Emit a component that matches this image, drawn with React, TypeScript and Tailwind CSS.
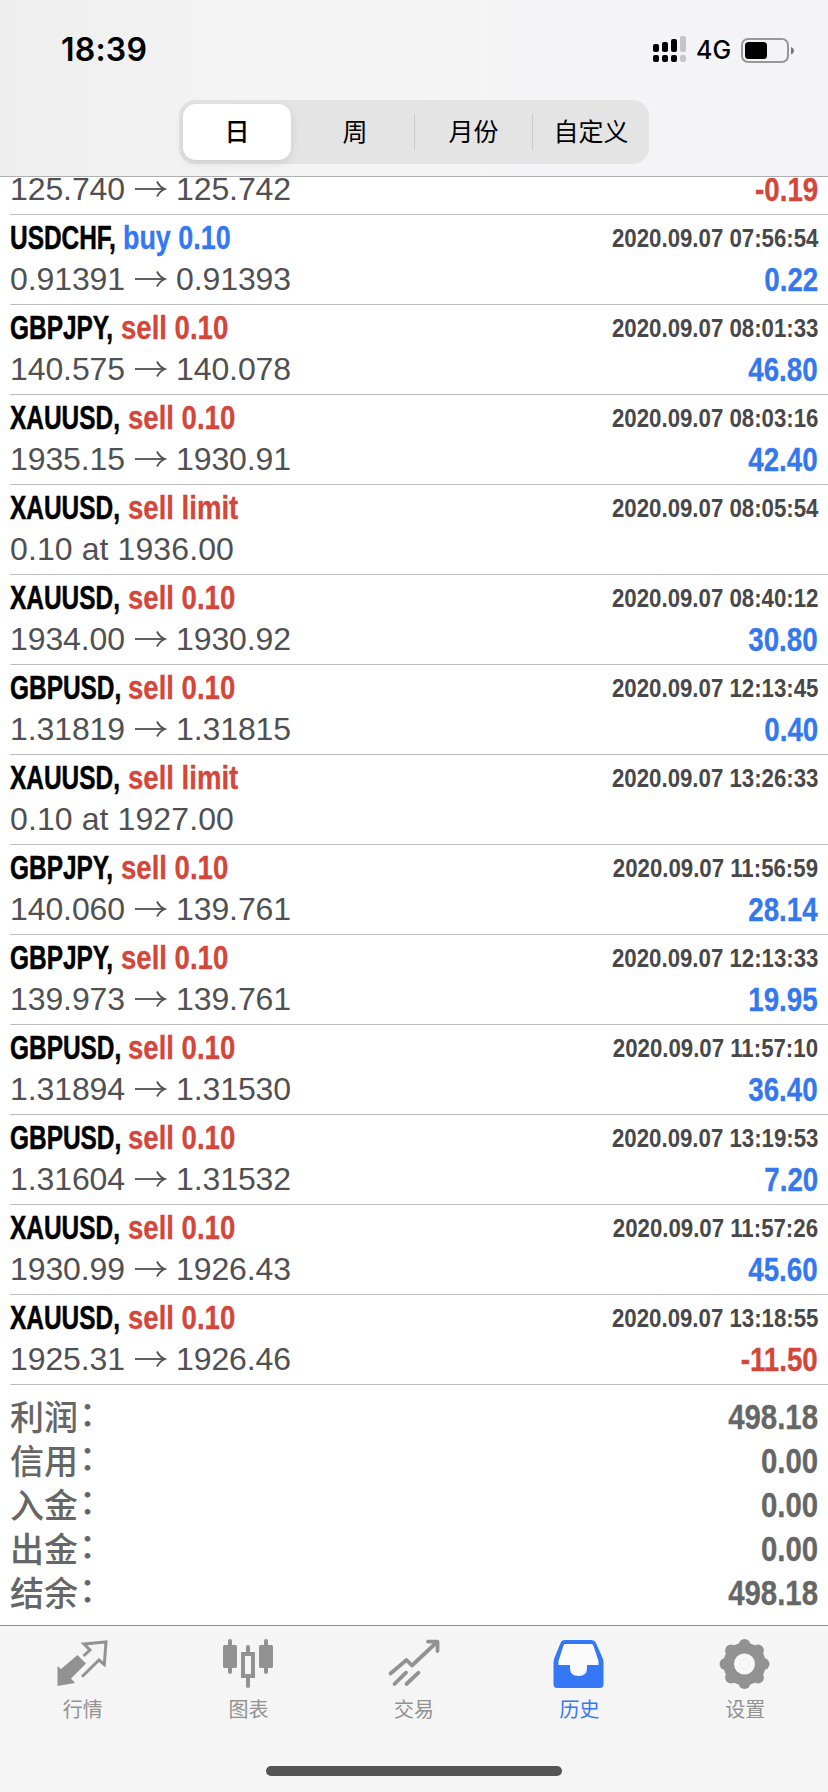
import type { ReactNode } from "react";

type Deal = {
  symbol: "USDCHF" | "GBPJPY" | "XAUUSD" | "GBPUSD";
  action: string;
  time: string;
  open?: string;
  close?: string;
  note?: string;
  profit?: string;
};

const deals: Deal[] = [
  { symbol: "USDCHF", action: "buy 0.10", time: "2020.09.07 07:56:54", open: "0.91391", close: "0.91393", profit: "0.22" },
  { symbol: "GBPJPY", action: "sell 0.10", time: "2020.09.07 08:01:33", open: "140.575", close: "140.078", profit: "46.80" },
  { symbol: "XAUUSD", action: "sell 0.10", time: "2020.09.07 08:03:16", open: "1935.15", close: "1930.91", profit: "42.40" },
  { symbol: "XAUUSD", action: "sell limit", time: "2020.09.07 08:05:54", note: "0.10 at 1936.00" },
  { symbol: "XAUUSD", action: "sell 0.10", time: "2020.09.07 08:40:12", open: "1934.00", close: "1930.92", profit: "30.80" },
  { symbol: "GBPUSD", action: "sell 0.10", time: "2020.09.07 12:13:45", open: "1.31819", close: "1.31815", profit: "0.40" },
  { symbol: "XAUUSD", action: "sell limit", time: "2020.09.07 13:26:33", note: "0.10 at 1927.00" },
  { symbol: "GBPJPY", action: "sell 0.10", time: "2020.09.07 11:56:59", open: "140.060", close: "139.761", profit: "28.14" },
  { symbol: "GBPJPY", action: "sell 0.10", time: "2020.09.07 12:13:33", open: "139.973", close: "139.761", profit: "19.95" },
  { symbol: "GBPUSD", action: "sell 0.10", time: "2020.09.07 11:57:10", open: "1.31894", close: "1.31530", profit: "36.40" },
  { symbol: "GBPUSD", action: "sell 0.10", time: "2020.09.07 13:19:53", open: "1.31604", close: "1.31532", profit: "7.20" },
  { symbol: "XAUUSD", action: "sell 0.10", time: "2020.09.07 11:57:26", open: "1930.99", close: "1926.43", profit: "45.60" },
  { symbol: "XAUUSD", action: "sell 0.10", time: "2020.09.07 13:18:55", open: "1925.31", close: "1926.46", profit: "-11.50" },
];

// the condensed symbols need a box of their own, a transform takes no part in layout
const symbolWidths: Record<Deal["symbol"], string> = {
  USDCHF: "w-[113px]",
  GBPJPY: "w-[111px]",
  XAUUSD: "w-[118px]",
  GBPUSD: "w-[118px]",
};

const summary = [
  { label: "利润", value: "498.18" },
  { label: "信用", value: "0.00" },
  { label: "入金", value: "0.00" },
  { label: "出金", value: "0.00" },
  { label: "结余", value: "498.18" },
];

function StatusBar() {
  return (
    <div className="flex h-[100px] items-start justify-between pt-[30px] pr-[33px] pl-[61px]">
      <span className="font-['Inter',sans-serif] text-[32px] leading-10 font-semibold tracking-[0.2px]">18:39</span>
      <div className="flex items-center pt-[5px]">
        <svg width="34" height="28" viewBox="0 0 34 28" className="-mt-[2px] mr-[9px]">
          <g fill="#000">
            <rect x="0" y="9" width="6" height="8" rx="2" />
            <rect x="9" y="7" width="6" height="10" rx="2" />
            <rect x="18" y="4" width="6" height="13" rx="2" />
            <rect x="0" y="20" width="6" height="7" rx="2" />
            <rect x="9" y="20" width="6" height="7" rx="2" />
            <rect x="18" y="20" width="6" height="7" rx="2" />
          </g>
          <g fill="#c6c6c7">
            <rect x="27" y="1" width="6" height="16" rx="2" />
            <rect x="27" y="20" width="6" height="7" rx="2" />
          </g>
        </svg>
        <span className="mt-px w-[45px] font-['Inter',sans-serif] text-[25px] leading-7 font-medium">4G</span>
        <svg width="54" height="28" viewBox="0 0 54 28">
          <rect x="1" y="3" width="46" height="23" rx="6" fill="none" stroke="#98989a" strokeWidth="2" />
          <rect x="4" y="6" width="22" height="17" rx="3.5" fill="#000" />
          <path d="M50 11c4 1.500 4 6 0 7.500z" fill="#77777a" />
        </svg>
      </div>
    </div>
  );
}

function PeriodPicker() {
  const cell = "flex h-[56px] shrink-0 items-center justify-center pb-[2px]";
  return (
    <div className="mx-auto flex h-[64px] w-[470px] items-center rounded-[16px] bg-[#e4e4e5] pl-[4px] font-['Noto_Sans_CJK_SC',sans-serif] text-[25px]">
      <div className={`${cell} mr-[5px] w-[108px] rounded-[13px] bg-white font-medium shadow-[0_3px_10px_rgba(0,0,0,0.1)]`}>日</div>
      <div className={`${cell} w-[118px]`}>周</div>
      <div className="h-[36px] w-px bg-[#cbcbcd]" />
      <div className={`${cell} w-[117px]`}>月份</div>
      <div className="h-[36px] w-px bg-[#cbcbcd]" />
      <div className={`${cell} w-[116px]`}>自定义</div>
    </div>
  );
}

function Prices({ open, close }: { open?: string; close?: string }) {
  return (
    <>
      <span className="w-[115px]">{open}</span>
      <svg width="32" height="20" viewBox="0 0 32 20" className="mr-[9px] ml-[10px] shrink-0" fill="none" stroke="#505052" strokeWidth="1.8">
        <path d="M0 10H29" />
        <path d="M22 2.500C24 6.500 26 8.500 30 10C26 11.500 24 13.500 22 17.500" />
      </svg>
      <span>{close}</span>
    </>
  );
}

const bold = "font-['Liberation_Sans',sans-serif] font-bold";
const priceText = "flex h-[38px] items-center font-['Liberation_Sans',sans-serif] text-[32px] leading-[38px] tracking-[-0.1px] whitespace-nowrap text-[#505052]";
const profitText = "inline-block origin-right scale-x-[0.84] text-[33px] leading-[40px] [-webkit-text-stroke:0.3px]";

function DealRow({ deal }: { deal: Deal }) {
  const profitColor = deal.profit?.startsWith("-") ? "text-[#d4463a]" : "text-[#3478f0]";
  const actionStyle = deal.action.startsWith("buy") ? "scale-x-[0.815] text-[#3478f6]" : "scale-x-[0.835] text-[#d4463a]";
  return (
    <li className="ml-[10px] flex h-[90px] justify-between border-b border-[#bcbcbf] pr-[10px]">
      <div>
        <div className={`${bold} flex h-[45px] items-center text-[33px] leading-[45px] whitespace-nowrap [-webkit-text-stroke:0.3px]`}>
          <div className={symbolWidths[deal.symbol]}>
            <span className="inline-block origin-left scale-x-[0.74] text-black [-webkit-text-stroke:0.5px]">{deal.symbol},</span>
          </div>
          <span className={`inline-block origin-left ${actionStyle}`}>{deal.action}</span>
        </div>
        <div className={priceText}>{deal.note ? <span className="tracking-[0.1px]">{deal.note}</span> : <Prices open={deal.open} close={deal.close} />}</div>
      </div>
      <div className={`${bold} flex flex-col items-end pt-px`}>
        <span className="inline-block h-[44px] origin-right scale-x-[0.855] text-[26px] leading-[45px] text-[#48484a]">{deal.time}</span>
        <span className={`${profitText} ${profitColor}`}>{deal.profit}</span>
      </div>
    </li>
  );
}

function Tab({ label, active, children }: { label: string; active?: boolean; children: ReactNode }) {
  return (
    <div className={`flex flex-1 flex-col items-center ${active ? "text-[#3478f6]" : "text-[#929292]"}`}>
      <svg width="52" height="52" viewBox="0 0 52 52" className="overflow-visible">
        {children}
      </svg>
      <span className="mt-[4px] font-['Noto_Sans_CJK_SC',sans-serif] text-[20px] leading-[30px]">{label}</span>
    </div>
  );
}

function GearIcon() {
  const angles = [0, 45, 90, 135, 180, 225, 270, 315];
  return (
    <g fill="currentColor">
      <circle cx="25.5" cy="26" r="21.3" />
      {angles.map((angle) => (
        <circle key={angle} cx="25.5" cy="7" r="6" transform={`rotate(${angle} 25.5 26)`} />
      ))}
      <circle cx="25.5" cy="26" r="10.5" fill="#f8f8f8" />
      <circle cx="25.5" cy="26" r="5" fill="none" stroke="#ececec" />
    </g>
  );
}

export default function App() {
  return (
    <div className="flex h-[1792px] w-[828px] flex-col overflow-hidden bg-white text-black">
      <header className="h-[177px] shrink-0 border-b border-[#b0b0b2] bg-linear-to-r from-[#eeeeef] via-[#f5f4f4] via-30% to-[#f4f4f8]">
        <StatusBar />
        <PeriodPicker />
      </header>

      <main className="h-[1448px] shrink-0 overflow-hidden">
        <ul className="-mt-[7px]">
          {/* the row that is scrolled half under the header */}
          <li className="ml-[10px] flex h-[45px] justify-between border-b border-[#bcbcbf] pr-[10px]">
            <div className={priceText}>
              <Prices open="125.740" close="125.742" />
            </div>
            <span className={`${bold} ${profitText} text-[#d4463a]`}>-0.19</span>
          </li>
          {deals.map((deal) => (
            <DealRow key={deal.time} deal={deal} />
          ))}
        </ul>
        <dl className="px-[10px] pt-[11px] text-[#666666]">
          {summary.map((item) => (
            <div key={item.label} className="flex h-[44px] justify-between">
              <dt className="flex font-['Noto_Sans_CJK_SC',sans-serif] text-[34px] leading-[40px] font-medium">
                {item.label}
                <span className="-mt-[4px] ml-px">：</span>
              </dt>
              <dd className={`${bold} origin-right scale-x-[0.84] text-[35px] leading-[42px] [-webkit-text-stroke:0.3px]`}>{item.value}</dd>
            </div>
          ))}
        </dl>
      </main>

      <footer className="flex h-[167px] shrink-0 flex-col border-t border-[#8e8e8e] bg-[#f5f5f5]">
        <nav className="flex h-[140px] pt-[12px]">
          <Tab label="行情">
            <path d="M.5 28L4 31L20.500 17L29 25.500L14 40.500L18 45L.5 48z" fill="currentColor" />
            <path d="M26.500 18L33 12L27 6L49 4L47.300 26.500L42 22L25 38.700" fill="none" stroke="currentColor" strokeWidth="3" />
          </Tab>
          <Tab label="图表">
            <g fill="currentColor">
              <rect x="1" y="7" width="14" height="23" rx="1.5" />
              <rect x="6" y="1" width="4" height="35" rx="2" />
              <rect x="37" y="7" width="14" height="23" rx="1.5" />
              <rect x="42" y="1" width="4" height="35" rx="2" />
              <rect x="24" y="7" width="4" height="9" rx="2" />
              <rect x="24" y="38" width="4" height="12" rx="2" />
            </g>
            <rect x="21" y="16" width="10" height="22" fill="none" stroke="currentColor" strokeWidth="4" />
          </Tab>
          <Tab label="交易">
            <g fill="none" stroke="currentColor" strokeWidth="3.8" strokeLinecap="round" strokeLinejoin="round">
              <path d="M2.500 35.500L18.500 22L24 27.500L49 4" />
              <path d="M40 3.700H49.500V13" />
              <path d="M6.500 46L18 34.700M18.500 46L30.500 34.700" />
            </g>
          </Tab>
          <Tab label="历史" active>
            <path
              d="M11 2H37Q40.500 2 42 5L49 21Q49.500 23 49.500 25V46Q49.500 50 46 50H3Q-.5 50 -.5 46V25Q-.5 23 0 21L6.500 5Q7.500 2 11 2z"
              fill="currentColor"
            />
            <path d="M11 6H37.500Q38.700 6 39.300 7.500L44.500 23V27H33V30Q33 38 24.500 38Q16 38 16 30V27H4.500V23L9.500 7.500Q10 6 11 6z" fill="#fbfbfb" />
          </Tab>
          <Tab label="设置">
            <GearIcon />
          </Tab>
        </nav>
        <div className="mx-auto h-[10px] w-[296px] rounded-full bg-[#545454]" />
      </footer>
    </div>
  );
}
